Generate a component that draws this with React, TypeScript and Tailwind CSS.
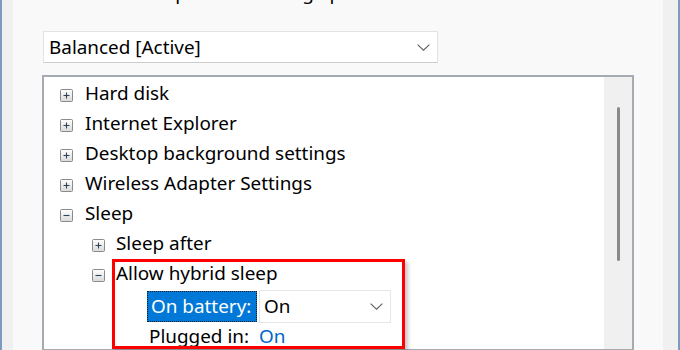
import React from "react";

const font = { fontFamily: '"Noto Sans", "Open Sans", sans-serif' };

function TreeBox({ open }: { open: boolean }) {
  return (
    <svg width="13" height="13" viewBox="0 0 13 13" className="shrink-0">
      <defs>
        <linearGradient id={open ? "gm" : "gp"} x1="0" y1="0" x2="0" y2="1">
          <stop offset="0" stopColor="#ffffff" />
          <stop offset="1" stopColor="#d9d9d9" />
        </linearGradient>
      </defs>
      <rect x="0.5" y="0.5" width="12" height="12" rx="1" fill={`url(#${open ? "gm" : "gp"})`} stroke="#8a8b8c" />
      <line x1="3.5" y1="6.5" x2="9.5" y2="6.5" stroke="#2f435a" strokeWidth="1.1" />
      {!open && <line x1="6.5" y1="3.5" x2="6.5" y2="9.5" stroke="#2f435a" strokeWidth="1.1" />}
    </svg>
  );
}

function Chevron() {
  return (
    <svg width="13" height="7" viewBox="0 0 13 7" className="shrink-0">
      <polyline points="0.6,0.6 6.5,6.2 12.4,0.6" fill="none" stroke="#5f5f5f" strokeWidth="1.1" />
    </svg>
  );
}

function Row({ level, open, label }: { level: 0 | 1; open: boolean; label: string }) {
  return (
    <div className={`flex items-start h-[30px] ${level === 0 ? "pl-[16px]" : "pl-[48px]"}`}>
      <div className="mt-[11px]">
        <TreeBox open={open} />
      </div>
      <span className={`leading-[30px] whitespace-nowrap ${level === 0 ? "ml-[12px]" : "ml-[11px]"}`}>{label}</span>
    </div>
  );
}

export default function App() {
  return (
    <div
      className="w-[680px] h-[350px] overflow-hidden flex bg-[#f0f0f0] border-x-2 border-[#7d9bbf] text-[18.9px] text-black"
      style={font}
    >
      <div className="w-[11px] shrink-0" />
      <div className="w-[650px] shrink-0 h-full bg-[#f9f9f9] pl-[29px] flex flex-col">
        <div className="h-[30px] -mt-[22px] leading-[30px] pl-[95px] whitespace-nowrap">
          computer to manage power.
        </div>
        <div className="mt-[23px] ml-[1px] w-[395px] h-[36px] bg-white border border-[#e3e3e3] border-b-[#cccccc] flex items-center pl-[5px] pr-[7px]">
          <span className="flex-1 leading-[30px]">Balanced [Active]</span>
          <Chevron />
        </div>
        <div className="mt-[12px] w-[592px] h-[300px] border-2 border-[#a6aab1] bg-white flex">
          <div className="relative flex-1 flex flex-col pt-[1px]">
            <Row level={0} open={false} label="Hard disk" />
            <Row level={0} open={false} label="Internet Explorer" />
            <Row level={0} open={false} label="Desktop background settings" />
            <Row level={0} open={false} label="Wireless Adapter Settings" />
            <Row level={0} open={true} label="Sleep" />
            <Row level={1} open={false} label="Sleep after" />
            <Row level={1} open={true} label="Allow hybrid sleep" />
            <div className="mt-[2px] h-[33px] flex items-center pl-[103px]">
              <div className="w-[110px] h-[31px] bg-[#0078d7] text-white border border-dotted border-[#1b1b1b] flex items-center pl-[3px] leading-[29px] whitespace-nowrap">
                On battery:
              </div>
              <div className="ml-[2px] w-[132px] h-[33px] bg-white border border-[#e6e6e6] flex items-center pl-[4px] pr-[7px]">
                <span className="flex-1">On</span>
                <Chevron />
              </div>
            </div>
            <div className="h-[26px] leading-[26px] flex pl-[105px] whitespace-nowrap">
              <span className="w-[110px]">Plugged in:</span>
              <span className="text-[#0066cc]">On</span>
            </div>
            <div className="absolute left-[68px] top-[182px] w-[293px] h-[90px] border-[3px] border-[#ff0000] shadow-[3px_3px_4px_rgba(0,0,0,0.22)]" />
          </div>
          <div className="w-[28px] bg-[#f0f0f0] flex justify-center pt-[30px]">
            <div className="w-[3px] h-[154px] rounded-full bg-[#8a8a8a]" />
          </div>
        </div>
      </div>
      <div className="flex-1" />
    </div>
  );
}
